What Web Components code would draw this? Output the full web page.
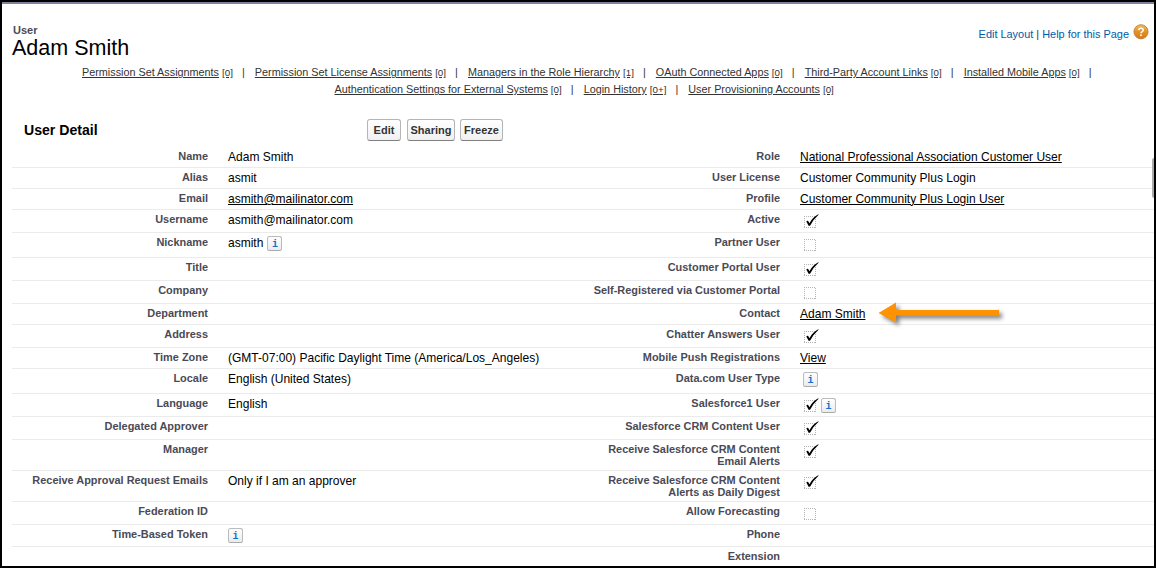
<!DOCTYPE html>
<html lang="en">
<head>
<meta charset="utf-8">
<title>Adam Smith</title>
<style>
html,body{margin:0;height:568px;overflow:hidden;background:#fff}
body{font-family:"Liberation Sans",Arial,sans-serif;font-size:12px;color:#000}
</style>
</head>
<body>
<user-page></user-page>
<script>
const define = (name, html, setup) => customElements.define(name, class extends HTMLElement {
  constructor() {
    super();
    const t = document.createElement('template');
    t.innerHTML = html;
    this.attachShadow({mode: 'open'}).append(t.content.cloneNode(true));
  }
  connectedCallback() { if (setup) setup(this, this.shadowRoot); }
});

define('info-icon', `<style>
:host{display:block;flex:none;box-sizing:border-box;width:15px;height:15px;border:1px solid #bbb;border-bottom-color:#aaa;border-radius:2.5px;background:linear-gradient(#fff,#e9ebf0);color:#1570c8;font:bold 10px/15px "Liberation Mono",monospace;text-align:center}
</style>i`);

define('check-box', `<style>
:host{display:block;flex:none;width:15px;height:14px}
svg{display:block}
.mark{display:none}
:host([checked]) .mark{display:block}
</style><svg width="15" height="14" viewBox="0 0 15 14"><path d="M0 2.5H12M0 13.5H12M.5 2V14M11.5 3V14" fill="none" stroke="#b4b4b4" stroke-dasharray="1 1"/><path class="mark" d="M2.3 7.6Q3.4 6.2 4.2 6.9L5.4 9.2Q8.6 3.3 14.2 .3L14.6 .7Q9.3 5.2 6.2 11.6L4.8 12Z" fill="#000"/></svg>`);

define('push-button', `<style>
:host{display:block;box-sizing:border-box;height:22px;border:1px solid #b5b5b5;border-bottom-color:#7f7f7f;border-radius:3px;background:linear-gradient(#fff,#f0f0f0);color:#333;font:bold 11px/20px "Liberation Sans",Arial,sans-serif;text-align:center;white-space:nowrap}
</style><slot></slot>`);

define('related-link', `<style>
:host{display:block;flex:none;font-size:10.82px;line-height:17px;white-space:nowrap;color:#333}
a{text-decoration:underline;text-underline-offset:1px;text-decoration-thickness:1px}
small{font-size:9.8px;text-decoration:underline;text-underline-offset:1px;text-decoration-thickness:1px;margin-left:3px}
i{font-style:normal;margin-left:9px}
</style><a><slot></slot></a><small></small><i>|</i>`, (h, r) => {
  r.querySelector('small').textContent = '[' + h.getAttribute('count') + ']';
  if (h.hasAttribute('last')) r.querySelector('i').remove();
});

define('orange-arrow', `<style>
:host{display:block;position:absolute;left:876px;top:300px;width:130px;height:32px}
svg{display:block;filter:drop-shadow(3px 3px 2px rgba(0,0,0,.5))}
</style><svg width="130" height="32"><path d="M2.5 13L20 2.5V10H123V15.5H20V22.5Z" fill="#ff9200"/></svg>`);

define('field-label', `<style>
:host{display:block;font-weight:bold;font-size:10.93px;line-height:12px;color:#4a4a56;text-align:right;padding-top:3px}
</style><slot></slot>`);

define('field-value', `<style>
:host{display:flex;align-items:flex-start;font-size:12.02px;white-space:nowrap}
span{line-height:14px;padding-top:3px}
:host([link]) span{text-decoration:underline;text-underline-offset:1px;text-decoration-thickness:1px}
check-box{margin:4px 0 0 4px}
info-icon{margin-top:3px}
span + info-icon{margin-left:4px}
check-box + info-icon{margin:4px 0 0 2px}
:host([inset]) info-icon{margin-left:3px}
</style>`, (h, r) => {
  const add = (tag, text) => { const e = document.createElement(tag); if (text) e.textContent = text; r.append(e); return e; };
  if (h.getAttribute('text')) add('span', h.getAttribute('text'));
  const c = h.getAttribute('check');
  if (c !== null) add('check-box').toggleAttribute('checked', c === 'on');
  if (h.hasAttribute('info')) add('info-icon');
});

define('detail-row', `<style>
:host{display:grid;grid-template-columns:196px 376px 196px 1fr;box-sizing:border-box;border-bottom:1px solid #ebebeb}
:host([open]){border-bottom:0}
.v{padding-left:20px}
</style><field-label></field-label><div class="v"></div><field-label></field-label><div class="v"></div>`);

// height, left label, left value, right label, right value
const rows = [
  [21,'Name',{text:'Adam Smith'},'Role',{text:'National Professional Association Customer User',link:''}],
  [21,'Alias',{text:'asmit'},'User License',{text:'Customer Community Plus Login'}],
  [21,'Email',{text:'asmith@mailinator.com',link:''},'Profile',{text:'Customer Community Plus Login User',link:''}],
  [23,'Username',{text:'asmith@mailinator.com'},'Active',{check:'on'}],
  [25,'Nickname',{text:'asmith',info:''},'Partner User',{check:'off'}],
  [23,'Title',{},'Customer Portal User',{check:'on'}],
  [23,'Company',{},'Self-Registered via Customer Portal',{check:'off'}],
  [21,'Department',{},'Contact',{text:'Adam Smith',link:''}],
  [23,'Address',{},'Chatter Answers User',{check:'on'}],
  [21,'Time Zone',{text:'(GMT-07:00) Pacific Daylight Time (America/Los_Angeles)'},'Mobile Push Registrations',{text:'View',link:''}],
  [25,'Locale',{text:'English (United States)'},'Data.com User Type',{info:'',inset:''}],
  [23,'Language',{text:'English'},'Salesforce1 User',{check:'on',info:''}],
  [23,'Delegated Approver',{},'Salesforce CRM Content User',{check:'on'}],
  [31,'Manager',{},'Receive Salesforce CRM Content Email Alerts',{check:'on'}],
  [31,'Receive Approval Request Emails',{text:'Only if I am an approver'},'Receive Salesforce CRM Content Alerts as Daily Digest',{check:'on'}],
  [23,'Federation ID',{},'Allow Forecasting',{check:'off'}],
  [22,'Time-Based Token',{info:''},'Phone',{}],
  [19,'',{},'Extension',{}]
];

define('user-details', `<style>
:host{display:block;padding-left:10px}
</style>`, (h, r) => rows.forEach((row, i) => {
  const e = document.createElement('detail-row');
  e.style.height = row[0] + 'px';
  if (i === rows.length - 1) e.setAttribute('open', '');
  const labels = e.shadowRoot.querySelectorAll('field-label');
  const cells = e.shadowRoot.querySelectorAll('.v');
  [0, 1].forEach(k => {
    labels[k].textContent = row[1 + 2 * k];
    const v = document.createElement('field-value');
    for (const [a, b] of Object.entries(row[2 + 2 * k])) v.setAttribute(a, b);
    cells[k].append(v);
  });
  r.append(e);
}));

define('user-page', `<style>
:host{display:block;position:relative;box-sizing:border-box;width:1156px;height:568px;border:2px solid #000;overflow:hidden;background:#fff}
.bar{height:2px;background:#7b849a}
header{display:flex;justify-content:space-between;height:60px}
.title{padding:21px 0 0 10px}
.kind{font-weight:bold;font-size:11px;line-height:11px;color:#4a4a56;padding-left:1px}
h1{margin:0;font-weight:normal;font-size:21.5px;line-height:24px;white-space:nowrap}
.help{display:flex;padding:20px 5px 0 0;font-size:10.93px;line-height:20px;color:#015ba7;white-space:pre}
.help b{font-weight:normal;color:#333}
.help svg{display:block;margin:0 0 0 4px}
nav{display:flex;gap:10.1px;height:17px}
.n1{padding-left:80px}.n2{padding-left:332.5px}
.head{display:flex;align-items:center;height:22px;padding:21px 0 6px 22px}
h2{margin:0;width:343px;font-size:14.1px;line-height:22px;white-space:nowrap}
.e{width:34px;margin-right:6px}.s{width:48px;margin-right:5px}.f{width:43px}
.thumb{position:absolute;right:0;top:156px;width:2px;height:40px;border-radius:2px 0 0 2px;background:#aaa}
orange-arrow{margin:-2px 0 0 -2px}
</style>
<div class="bar"></div>
<header><div class="title"><div class="kind">User</div><h1>Adam Smith</h1></div>
<div class="help"><span>Edit Layout</span><b> | </b><span>Help for this Page</span><svg width="16" height="18" viewBox="0 0 16 18"><defs><linearGradient id="g" x2="0" y2="1"><stop stop-color="#f4b95b"/><stop offset=".55" stop-color="#e28f22"/><stop offset="1" stop-color="#d27a16"/></linearGradient></defs><circle cx="8" cy="7.8" r="7.1" fill="url(#g)" stroke="#b97a35" stroke-width=".8"/><path d="M5.7 6.1Q5.8 4.2 8 4.2Q10.3 4.2 10.3 6Q10.3 7 9.2 7.6Q8 8.2 8 9.2" fill="none" stroke="#fff" stroke-width="1.5"/><circle cx="8" cy="11.2" r=".95" fill="#fff"/></svg></div></header>
<nav class="n1"><related-link count="0">Permission Set Assignments</related-link><related-link count="0">Permission Set License Assignments</related-link><related-link count="1">Managers in the Role Hierarchy</related-link><related-link count="0">OAuth Connected Apps</related-link><related-link count="0">Third-Party Account Links</related-link><related-link count="0">Installed Mobile Apps</related-link></nav>
<nav class="n2"><related-link count="0">Authentication Settings for External Systems</related-link><related-link count="0+">Login History</related-link><related-link count="0" last>User Provisioning Accounts</related-link></nav>
<div class="head"><h2>User Detail</h2><push-button class="e">Edit</push-button><push-button class="s">Sharing</push-button><push-button class="f">Freeze</push-button></div>
<user-details></user-details>
<orange-arrow></orange-arrow>
<div class="thumb"></div>`);
</script>
</body>
</html>
